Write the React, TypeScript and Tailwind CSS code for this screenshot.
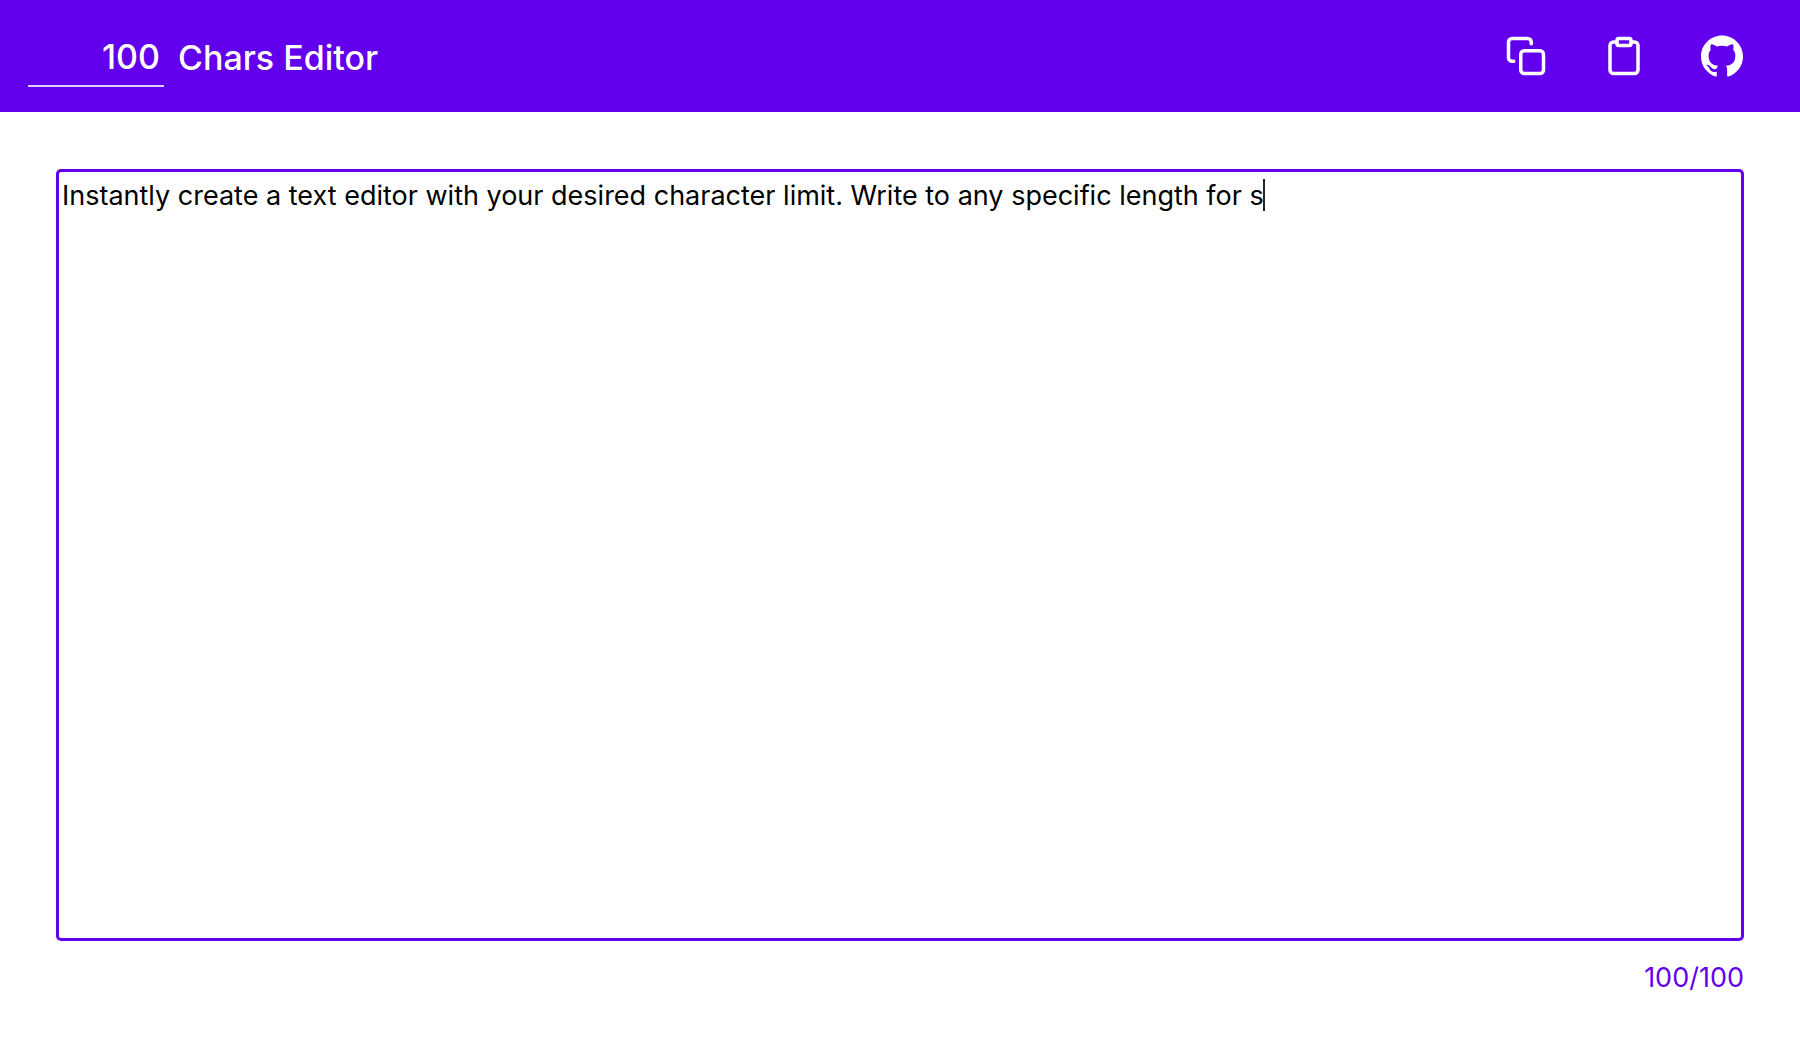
import { useLayoutEffect, useRef, useState } from "react";
import { FiClipboard, FiCopy } from "react-icons/fi";
import { SiGithub } from "react-icons/si";

const INITIAL_TEXT =
  "Instantly create a text editor with your desired character limit. Write to any specific length for s";

function textWidth(text: string, element: HTMLElement) {
  const context = document.createElement("canvas").getContext("2d");
  if (!context) return 0;
  const style = getComputedStyle(element);
  context.font = `${style.fontWeight} ${style.fontSize} ${style.fontFamily}`;
  return context.measureText(text).width;
}

export default function App() {
  const [limit, setLimit] = useState(100);
  const [text, setText] = useState(INITIAL_TEXT);
  const [caret, setCaret] = useState(0);
  const editor = useRef<HTMLTextAreaElement>(null);

  useLayoutEffect(() => {
    if (editor.current) setCaret(Math.round(textWidth(text, editor.current)));
  }, [text]);

  return (
    <div className="flex h-screen flex-col bg-white font-['Inter',sans-serif]">
      <header className="flex h-28 shrink-0 items-center justify-between bg-[#6200ee] pr-[57px] pl-7 text-white">
        <div className="flex items-center gap-3.5">
          <input
            id="limit"
            type="text"
            inputMode="numeric"
            value={limit}
            onChange={(e) => setLimit(Number(e.target.value.replace(/\D/g, "")))}
            className="h-[62px] w-[136px] border-b-2 border-white/80 bg-transparent pt-0.5 pr-1 text-right text-[34px] font-medium outline-none"
          />
          <label htmlFor="limit" className="pt-0.5 text-[34px] font-medium">
            Chars Editor
          </label>
        </div>
        <nav className="flex items-center gap-14">
          <button
            type="button"
            aria-label="Copy"
            onClick={() => navigator.clipboard.writeText(text)}
          >
            <FiCopy size={42} />
          </button>
          <button
            type="button"
            aria-label="Paste"
            onClick={async () =>
              setText((await navigator.clipboard.readText()).slice(0, limit))
            }
          >
            <FiClipboard size={42} />
          </button>
          <a href="https://github.com" aria-label="GitHub">
            <SiGithub size={42} />
          </a>
        </nav>
      </header>
      <main className="flex flex-1 flex-col px-14 pt-[57px] pb-14">
        <div className="relative flex flex-1">
          <textarea
            ref={editor}
            aria-label="Text"
            spellCheck={false}
            maxLength={limit}
            value={text}
            onChange={(e) => setText(e.target.value)}
            className="w-full flex-1 resize-none rounded-[5px] border-3 border-[#6200ee] bg-white px-[3px] py-1 text-[27px] leading-10 text-black caret-transparent outline-none"
          />
          <span
            aria-hidden="true"
            className="absolute top-2.5 h-8 w-0.5 bg-neutral-800"
            style={{ left: caret + 5 }}
          />
        </div>
        <output className="mt-[17px] text-right text-[27px] leading-10 text-[#6200ee]">
          {text.length}/{limit}
        </output>
      </main>
    </div>
  );
}
